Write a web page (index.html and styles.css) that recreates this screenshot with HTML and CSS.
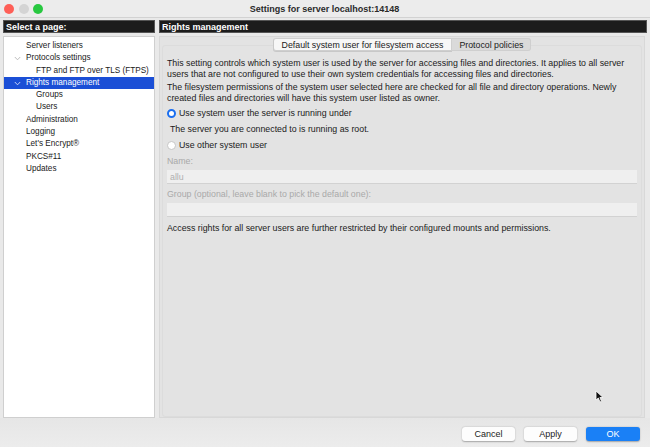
FILE: index.html
```html
<!DOCTYPE html>
<html>
<head>
<meta charset="utf-8">
<link rel="stylesheet" href="styles.css">
</head>
<body>
<div class="window">
  <div class="titlebar">
    <div class="lights">
      <span class="light red"></span>
      <span class="light gray"></span>
      <span class="light green"></span>
    </div>
    <div class="title">Settings for server localhost:14148</div>
  </div>
  <div class="main">
    <div class="leftcol">
      <div class="header">Select a page:</div>
      <div class="tree">
        <div class="row l1">Server listeners</div>
        <div class="row l1"><svg class="chev" width="7" height="5" viewBox="0 0 7 5"><path d="M0.8 1 L3.5 3.8 L6.2 1" fill="none" stroke="#b5b5b5" stroke-width="0.9"/></svg>Protocols settings</div>
        <div class="row l2">FTP and FTP over TLS (FTPS)</div>
        <div class="row l1 sel"><svg class="chev" width="7" height="5" viewBox="0 0 7 5"><path d="M0.8 1 L3.5 3.8 L6.2 1" fill="none" stroke="#d8e0f8" stroke-width="0.9"/></svg>Rights management</div>
        <div class="row l2">Groups</div>
        <div class="row l2">Users</div>
        <div class="row l1">Administration</div>
        <div class="row l1">Logging</div>
        <div class="row l1">Let's Encrypt®</div>
        <div class="row l1">PKCS#11</div>
        <div class="row l1">Updates</div>
      </div>
    </div>
    <div class="rightcol">
      <div class="header">Rights management</div>
      <div class="panel">
        <div class="tabs">
          <div class="tab active">Default system user for filesystem access</div>
          <div class="tab">Protocol policies</div>
        </div>
        <div class="page">
          <p class="para">This setting controls which system user is used by the server for accessing files and directories. It applies to all server users that are not configured to use their own system credentials for accessing files and directories.</p>
          <p class="para">The filesystem permissions of the system user selected here are checked for all file and directory operations. Newly created files and directories will have this system user listed as owner.</p>
          <div class="radio-row"><span class="radio on"></span>Use system user the server is running under</div>
          <div class="note">The server you are connected to is running as root.</div>
          <div class="radio-row r2"><span class="radio"></span>Use other system user</div>
          <div class="label">Name:</div>
          <div class="input">allu</div>
          <div class="label">Group (optional, leave blank to pick the default one):</div>
          <div class="input"></div>
          <p class="para last">Access rights for all server users are further restricted by their configured mounts and permissions.</p>
        </div>
      </div>
    </div>
  </div>
  <div class="footer">
    <button class="btn">Cancel</button>
    <button class="btn">Apply</button>
    <button class="btn ok">OK</button>
  </div>
  <svg class="cursor" width="9" height="13" viewBox="0 0 9 13"><path d="M1 1 L1 10 L3.3 8 L5 12 L6.5 11.3 L4.9 7.5 L8 7.5 Z" fill="#111" stroke="#fff" stroke-width="0.8"/></svg>
</div>
</body>
</html>
```
FILE: styles.css
```css
html, body {
  margin: 0;
  padding: 0;
}
body {
  width: 650px;
  height: 447px;
  overflow: hidden;
  font-family: "Liberation Sans", Arial, sans-serif;
  font-size: 8.8px;
  color: #1a1a1a;
  background: #e9e9e9;
}
.window {
  position: relative;
  width: 650px;
  height: 447px;
  display: flex;
  flex-direction: column;
}
.titlebar {
  height: 17px;
  border-bottom: 1px solid #d2d2d2;
  background: #ececec;
  display: flex;
  align-items: center;
  position: relative;
}
.lights {
  display: flex;
  gap: 4.5px;
  padding-left: 4px;
}
.light {
  width: 10px;
  height: 10px;
  border-radius: 50%;
  display: inline-block;
}
.light.red { background: #fe5f57; }
.light.gray { background: #d4d4d4; }
.light.green { background: #28c840; }
.title {
  flex: 1;
  text-align: center;
  font-weight: bold;
  font-size: 9px;
  color: #2a2a2a;
  margin-right: 44px;
}
.main {
  display: flex;
  gap: 4px;
  padding: 2px 3px 0 3px;
  height: 398px;
}
.leftcol {
  width: 152px;
  display: flex;
  flex-direction: column;
}
.rightcol {
  flex: 1;
  display: flex;
  flex-direction: column;
}
.header {
  height: 13px;
  background: #1c1c1c;
  color: #fff;
  font-weight: bold;
  font-size: 9px;
  line-height: 12px;
  padding-left: 2px;
  border: 1px solid #555;
  box-sizing: border-box;
}
.tree {
  margin-top: 3px;
  flex: 1;
  background: #fff;
  border: 1px solid #cfcfcf;
  padding-top: 3px;
  font-size: 8.2px;
}
.row {
  height: 12.3px;
  line-height: 12.3px;
  position: relative;
  white-space: nowrap;
}
.row.l1 { padding-left: 22px; }
.row.l2 { padding-left: 32px; }
.row.sel {
  background: #1b4fd6;
  color: #fff;
}
.chev {
  position: absolute;
  left: 10px;
  top: 4px;
}
.panel {
  margin-top: 3px;
  flex: 1;
  background: #e3e3e3;
  border: 1px solid #d8d8d8;
  margin-right: 2px;
  display: flex;
  flex-direction: column;
  padding: 1px 2px 0 2px;
}
.tabs {
  display: flex;
  justify-content: center;
  height: 13px;
  position: relative;
  z-index: 1;
}
.tab {
  height: 13px;
  line-height: 13px;
  padding: 0 7px;
  background: #dadada;
  border: 1px solid #cfcfcf;
  border-left: none;
  box-sizing: border-box;
  border-radius: 0 3px 3px 0;
}
.tab.active {
  background: #f7f7f7;
  border-left: 1px solid #c9c9c9;
  border-radius: 3px 0 0 3px;
  box-shadow: 0 1px 0 #c8c8c8;
  padding: 0 8px;
}
.page {
  margin-top: -6px;
  flex: 1;
  border: 1px solid #dcdcdc;
  border-radius: 3px;
  background: #e3e3e3;
  padding: 12px 4px 0 4px;
}
.para {
  margin: 0 0 2px 0;
  line-height: 11px;
}
.radio-row {
  display: flex;
  align-items: center;
  height: 12px;
  margin-top: 3px;
}
.radio-row.r2 { margin-top: 4px; }
.radio {
  width: 9px;
  height: 9px;
  border-radius: 50%;
  background: #fff;
  border: 0.5px solid #c6c6c6;
  box-sizing: border-box;
  margin-right: 3px;
  display: inline-block;
}
.radio.on {
  background: #fff;
  border: 2.5px solid #1b6ff0;
}
.note {
  margin-top: 4px;
  padding-left: 3px;
  line-height: 12px;
}
.label {
  color: #a9a9a9;
  margin-top: 5px;
  line-height: 11px;
}
.input {
  height: 14px;
  line-height: 14px;
  background: #efefef;
  border-bottom: 1px solid #d2d2d2;
  box-sizing: border-box;
  color: #b0b0b0;
  padding-left: 3px;
  margin-top: 3px;
}
.para.last {
  margin-top: 6px;
}
.footer {
  flex: 1;
  display: flex;
  justify-content: flex-end;
  align-items: center;
  gap: 9px;
  padding-right: 10px;
  background: linear-gradient(#e6e6e6, #ececec);
}
.btn {
  width: 53px;
  height: 14px;
  font-family: "Liberation Sans", Arial, sans-serif;
  font-size: 9px;
  background: #fdfdfd;
  border: none;
  border-radius: 3px;
  box-shadow: 0 0.5px 1.5px rgba(0,0,0,0.3);
  color: #222;
  padding: 0;
  margin-top: 2px;
}
.btn.ok {
  width: 54px;
  background: #1a80f6;
  color: #fff;
}
.cursor {
  position: absolute;
  left: 595px;
  top: 390px;
}
```
